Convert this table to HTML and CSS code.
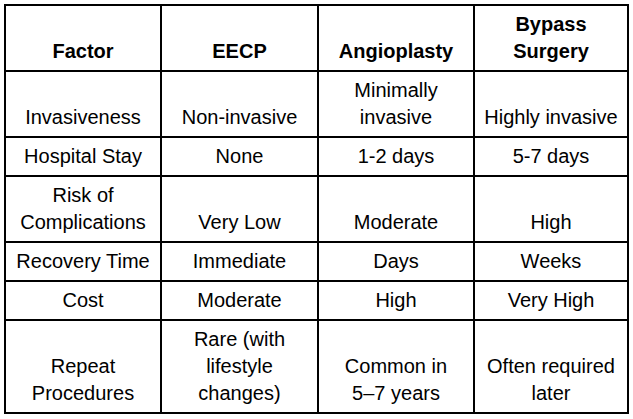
FILE: index.html
```html
<!DOCTYPE html>
<html lang="en">
<head>
<meta charset="utf-8">
<title>EECP vs Angioplasty vs Bypass Surgery</title>
<link rel="stylesheet" href="styles.css">
</head>
<body>
<table class="compare">
  <colgroup>
    <col class="c1">
    <col class="c2">
    <col class="c3">
    <col class="c4">
  </colgroup>
  <thead>
    <tr>
      <th>Factor</th>
      <th>EECP</th>
      <th>Angioplasty</th>
      <th>Bypass Surgery</th>
    </tr>
  </thead>
  <tbody>
    <tr>
      <td>Invasiveness</td>
      <td>Non-invasive</td>
      <td>Minimally invasive</td>
      <td>Highly invasive</td>
    </tr>
    <tr>
      <td>Hospital Stay</td>
      <td>None</td>
      <td>1-2 days</td>
      <td>5-7 days</td>
    </tr>
    <tr>
      <td>Risk of Complications</td>
      <td>Very Low</td>
      <td>Moderate</td>
      <td>High</td>
    </tr>
    <tr>
      <td>Recovery Time</td>
      <td>Immediate</td>
      <td>Days</td>
      <td>Weeks</td>
    </tr>
    <tr>
      <td>Cost</td>
      <td>Moderate</td>
      <td>High</td>
      <td>Very High</td>
    </tr>
    <tr>
      <td>Repeat Procedures</td>
      <td>Rare (with lifestyle changes)</td>
      <td>Common in <span class="nowrap">5–7</span> years</td>
      <td>Often required later</td>
    </tr>
  </tbody>
</table>
</body>
</html>
```
FILE: styles.css
```css
html, body {
  background: #ffffff;
}
body {
  margin: 4px;
  font-family: "Liberation Sans", Arial, sans-serif;
  font-size: 20px;
  line-height: 27px;
  color: #000000;
}
.compare {
  width: 625px;
  border-collapse: collapse;
  table-layout: fixed;
  border: 2px solid #000000;
}
.c1 { width: 156px; }
.c2 { width: 157px; }
.c3 { width: 156px; }
.c4 { width: 154px; }
.compare th,
.compare td {
  border: 2px solid #000000;
  padding: 5px 8px;
  text-align: center;
  vertical-align: bottom;
}
.compare th {
  font-weight: bold;
}
.nowrap {
  white-space: nowrap;
}
```
